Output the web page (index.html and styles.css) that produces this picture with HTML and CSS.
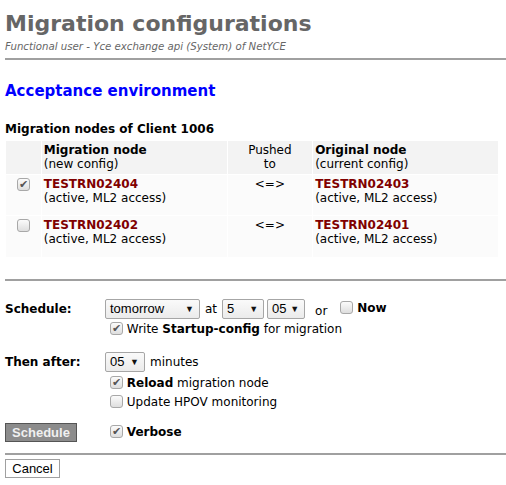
FILE: index.html
```html
<!DOCTYPE html>
<html>
<head>
<meta charset="utf-8">
<link rel="stylesheet" href="styles.css">
</head>
<body>
<h1 class="title">Migration configurations</h1>
<div class="subtitle">Functional user - Yce exchange api (System) of NetYCE</div>
<hr class="rule rule-top">
<h2 class="env">Acceptance environment</h2>
<div class="nodes-title">Migration nodes of Client 1006</div>
<table class="nodes">
  <tr class="head">
    <td class="c-check"></td>
    <td class="c-node"><b>Migration node</b><br>(new config)</td>
    <td class="c-push">Pushed<br>to</td>
    <td class="c-node"><b>Original node</b><br>(current config)</td>
  </tr>
  <tr class="row">
    <td class="c-check"><input type="checkbox" class="cb" checked></td>
    <td class="c-node"><span class="node">TESTRN02404</span><br>(active, ML2 access)</td>
    <td class="c-push">&lt;=&gt;</td>
    <td class="c-node"><span class="node">TESTRN02403</span><br>(active, ML2 access)</td>
  </tr>
  <tr class="row row2">
    <td class="c-check"><input type="checkbox" class="cb"></td>
    <td class="c-node"><span class="node">TESTRN02402</span><br>(active, ML2 access)</td>
    <td class="c-push">&lt;=&gt;</td>
    <td class="c-node"><span class="node">TESTRN02401</span><br>(active, ML2 access)</td>
  </tr>
</table>
<hr class="rule rule-mid">
<div class="form">
  <div class="frow r-sched">
    <div class="flabel">Schedule:</div>
    <div class="fval">
      <span class="sel w-day">tomorrow<span class="arr">▼</span></span>
      <span class="txt at">at</span>
      <span class="sel w-hour">5<span class="arr">▼</span></span>
      <span class="sel w-min">05<span class="arr">▼</span></span>
      <span class="txt or">or</span>
      <label class="chk now"><input type="checkbox" class="cb"> <b>Now</b></label>
    </div>
  </div>
  <div class="frow r-sub">
    <div class="flabel"></div>
    <div class="fval"><label class="chk"><input type="checkbox" class="cb" checked> Write <b>Startup-config</b> for migration</label></div>
  </div>
  <div class="frow r-then">
    <div class="flabel">Then after:</div>
    <div class="fval">
      <span class="sel w-wait">05<span class="arr">▼</span></span>
      <span class="txt">minutes</span>
    </div>
  </div>
  <div class="frow r-sub r-reload">
    <div class="flabel"></div>
    <div class="fval"><label class="chk"><input type="checkbox" class="cb" checked> <b>Reload</b> migration node</label></div>
  </div>
  <div class="frow r-sub r-hpov">
    <div class="flabel"></div>
    <div class="fval"><label class="chk"><input type="checkbox" class="cb"> Update HPOV monitoring</label></div>
  </div>
  <div class="frow r-go">
    <div class="flabel"><button class="btn-sched">Schedule</button></div>
    <div class="fval"><label class="chk"><input type="checkbox" class="cb" checked> <b>Verbose</b></label></div>
  </div>
</div>
<hr class="rule rule-bot">
<button class="btn-cancel">Cancel</button>
</body>
</html>
```
FILE: styles.css
```css
html, body {
  margin: 0;
  padding: 0;
  background: #fff;
}
body {
  padding-left: 5px;
  font-family: "DejaVu Sans", Verdana, sans-serif;
  font-size: 12px;
  line-height: 14px;
  color: #000;
}
.title {
  margin: 0;
  padding-top: 10px;
  font-size: 22px;
  line-height: 28px;
  font-weight: bold;
  color: #666;
}
.subtitle {
  margin-top: 2px;
  font-size: 10.2px;
  line-height: 13px;
  font-style: italic;
  color: #666;
}
.rule {
  margin: 0;
  border: 0;
  height: 2px;
  background: #a0a0a0;
}
.rule-top { margin-top: 5px; }
.env {
  margin: 21px 0 0;
  font-size: 15px;
  line-height: 20px;
  font-weight: bold;
  color: #0000ff;
}
.nodes-title {
  margin-top: 21px;
  font-weight: bold;
}
.nodes {
  margin-top: 4px;
  border-collapse: separate;
  border-spacing: 1px;
  width: 494px;
}
.nodes td {
  vertical-align: top;
  padding: 1px 2px 1px;
}
.head td {
  background: #f3f3f3;
  padding-top: 2px;
  padding-bottom: 3px;
}
.row td {
  background: #fbfbfb;
  padding-top: 2px;
  padding-bottom: 10px;
}
.row2 td { padding-bottom: 11px; }
.c-check { width: 31px; text-align: center; }
.c-node { width: 182px; }
.c-push { width: 81px; text-align: center; }
.node {
  font-weight: bold;
  color: #800000;
}
.cb {
  -webkit-appearance: none;
  appearance: none;
  width: 13px;
  height: 13px;
  margin: 0;
  border: 1px solid #a8a8a8;
  border-radius: 3px;
  background: linear-gradient(#fbfbfb, #dedede);
  box-sizing: border-box;
  position: relative;
  vertical-align: -2px;
}
.cb:checked::after {
  content: "✔";
  position: absolute;
  left: 1px;
  top: -2px;
  font-size: 11px;
  line-height: 14px;
  color: #555;
}
.nodes .cb { margin-top: 1px; vertical-align: top; }
.rule-mid { margin-top: 21px; }
.form { margin-top: 18px; }
.frow {
  display: flex;
  align-items: center;
}
.flabel {
  width: 100px;
  flex: none;
  font-weight: bold;
}
.fval {
  display: flex;
  align-items: center;
}
.r-sched { height: 20px; }
.r-sub { height: 19px; }
.r-sub .fval { padding-left: 5px; }
.r-then { height: 20px; margin-top: 14px; }
.r-reload { margin-top: 1px; }
.r-go { height: 22px; margin-top: 10px; }
.r-go .fval { padding-left: 5px; }
.sel {
  display: inline-flex;
  align-items: center;
  justify-content: space-between;
  box-sizing: border-box;
  height: 20px;
  padding: 0 5px 0 4px;
  border: 1px solid #a6a6a6;
  border-radius: 2px;
  background: linear-gradient(#fafafa, #ebebeb);
  font-family: "Liberation Sans", Arial, sans-serif;
  font-size: 13px;
}
.arr {
  font-size: 9px;
  color: #111;
}
.w-day { width: 95px; }
.w-hour { width: 42px; }
.w-min { width: 38px; margin-left: 3px; }
.w-wait { width: 40px; }
.txt { margin-left: 5px; }
.at { margin-right: 5px; }
.or { margin-left: 10px; margin-right: 13px; margin-top: 3px; }
.chk {
  display: inline-block;
  white-space: nowrap;
}
.now { margin-bottom: 3px; }
.btn-sched {
  box-sizing: border-box;
  width: 72px;
  height: 19px;
  padding: 0;
  border: 1px solid #555;
  background: #8c8c8c;
  color: #f0f0f0;
  font-family: "Liberation Sans", Arial, sans-serif;
  font-size: 13px;
  font-weight: bold;
}
.rule-bot { margin-top: 10px; }
.btn-cancel {
  margin-top: 4px;
  box-sizing: border-box;
  width: 55px;
  height: 19px;
  padding: 0;
  border: 1px solid #a0a0a0;
  background: #fff;
  color: #000;
  font-family: "Liberation Sans", Arial, sans-serif;
  font-size: 13px;
}
```
